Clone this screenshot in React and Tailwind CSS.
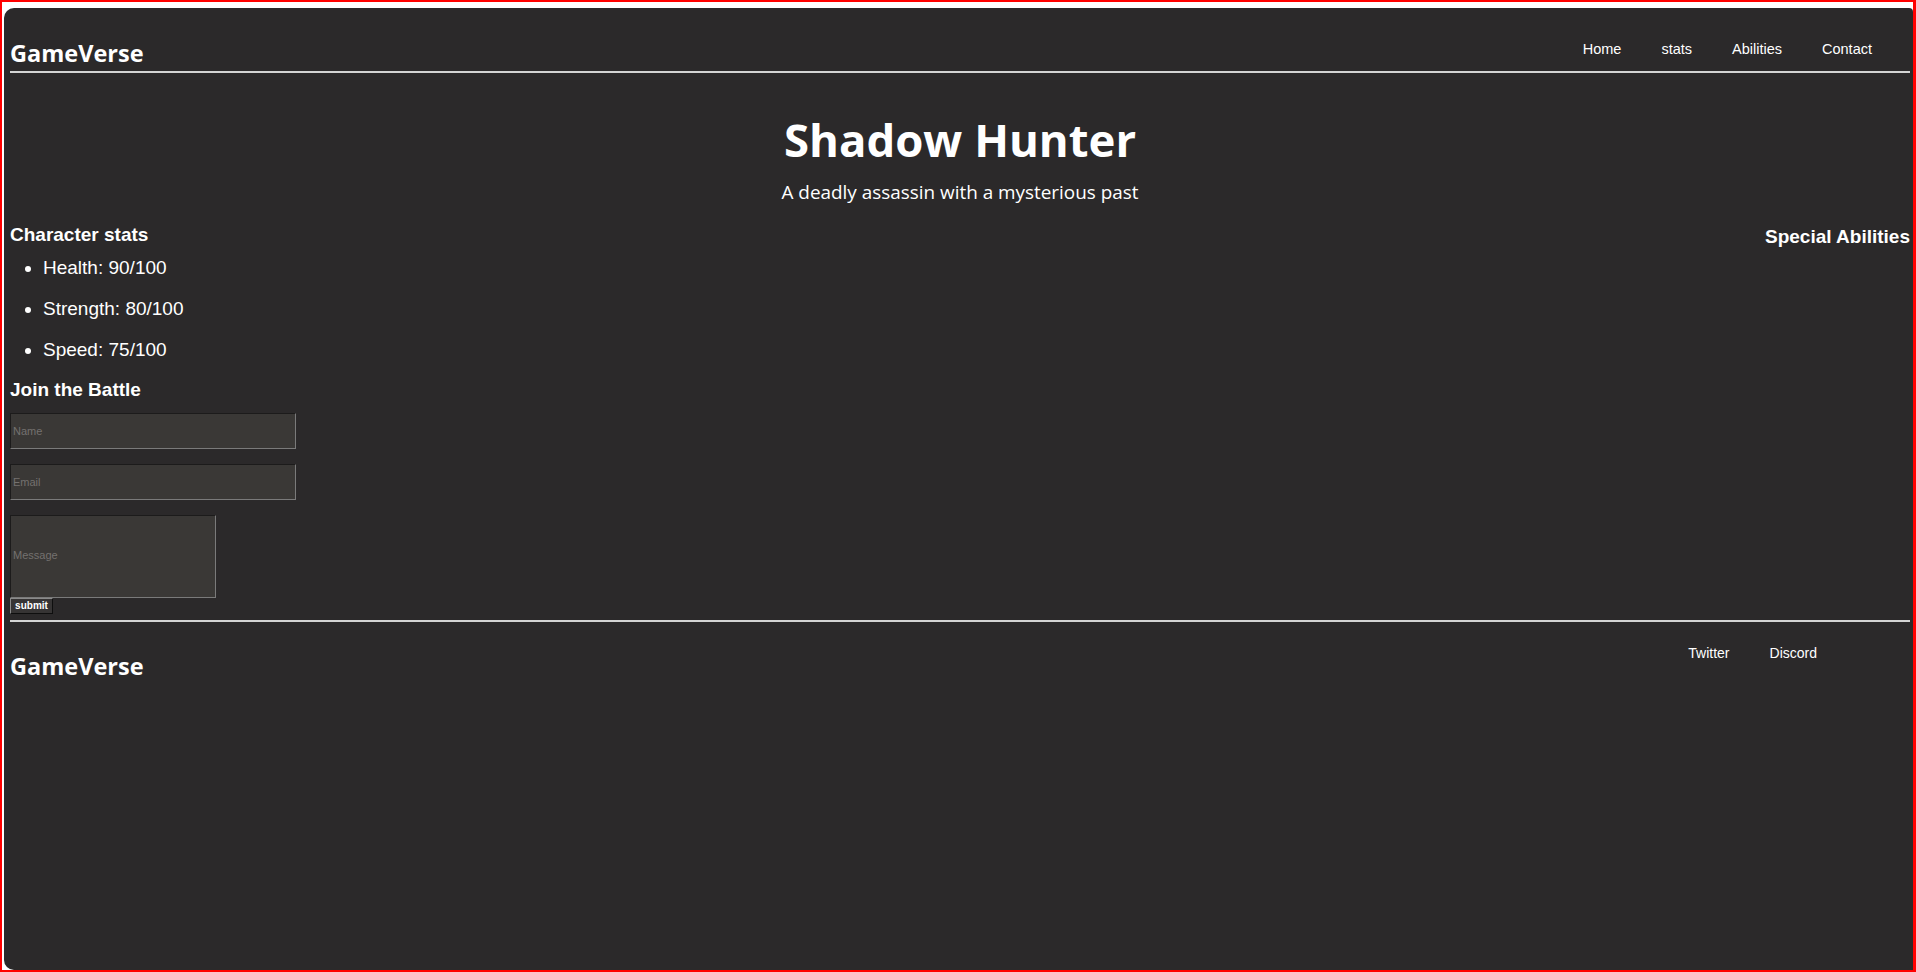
const navLinks = ['Home', 'stats', 'Abilities', 'Contact'];

const stats = [
  { label: 'Health', value: '90/100' },
  { label: 'Strength', value: '80/100' },
  { label: 'Speed', value: '75/100' },
];

const segoe = { fontFamily: '"Open Sans", "Noto Sans", sans-serif' };

const App = () => {
  return (
    <div
      className="h-[972px] w-full overflow-hidden border-2 border-r-[3px] border-[#ff0000] bg-white"
      style={{ fontFamily: '"Liberation Sans", Arial, sans-serif' }}
    >
      <div className="mt-[6px] ml-[2px] h-[962px] rounded-l-[10px] rounded-tr-[4px] bg-[#2b292a] pl-[6px] pr-[3px] text-white">
        {/* Header */}
        <header className="flex justify-between border-b-2 border-[#d4d4d4]">
          <div
            className="pt-[29px] pb-[2px] text-[23.5px] font-bold leading-[32px]"
            style={segoe}
          >
            GameVerse
          </div>
          <ul className="flex gap-10 pt-[31px] pr-[38px] text-[14.5px] leading-[20px]">
            {navLinks.map((link) => (
              <li key={link}>
                <a href="#">{link}</a>
              </li>
            ))}
          </ul>
        </header>

        {/* Hero */}
        <section className="text-center" style={segoe}>
          <h1 className="mt-[38px] text-[45.5px] font-bold leading-[56px]">
            Shadow Hunter
          </h1>
          <p className="mt-[11px] text-[18.9px] leading-[28px]">
            A deadly assassin with a mysterious past
          </p>
        </section>

        {/* Stats + abilities */}
        <section className="mt-[18px] flex justify-between">
          <div>
            <h3 className="text-[19px] font-bold leading-[22px]">
              Character stats
            </h3>
            <ul className="mt-[11px] flex list-disc flex-col gap-[19px] pl-[33px] text-[19px] leading-[22px]">
              {stats.map((s) => (
                <li key={s.label}>
                  {s.label}: {s.value}
                </li>
              ))}
            </ul>

            <h3 className="mt-[18px] text-[19px] font-bold leading-[22px]">
              Join the Battle
            </h3>
            <form className="mt-[12px] flex flex-col items-start">
              <input
                type="text"
                placeholder="Name"
                className="h-[36px] w-[286px] border border-t-[#1c1b1b] border-l-[#1c1b1b] border-r-[#7a7a7a] border-b-[#7a7a7a] bg-[#3a3836] px-[2px] text-[11px] text-white outline-none placeholder:text-[#74716f]"
              />
              <input
                type="email"
                placeholder="Email"
                className="mt-[15px] h-[36px] w-[286px] border border-t-[#1c1b1b] border-l-[#1c1b1b] border-r-[#7a7a7a] border-b-[#7a7a7a] bg-[#3a3836] px-[2px] text-[11px] text-white outline-none placeholder:text-[#74716f]"
              />
              <textarea
                placeholder="Message"
                className="mt-[15px] block h-[83px] w-[206px] resize-none border border-t-[#1c1b1b] border-l-[#1c1b1b] border-r-[#7a7a7a] border-b-[#7a7a7a] bg-[#3a3836] px-[2px] pt-[33px] text-[11px] leading-[13px] text-white outline-none placeholder:text-[#74716f]"
              />
              <button
                type="button"
                className="h-[16px] w-[43px] border border-t-[#8a8a8a] border-l-[#8a8a8a] border-r-[#0e0e0e] border-b-[#0e0e0e] bg-[#363434] text-[10px] font-bold leading-[14px] text-white"
              >
                submit
              </button>
            </form>
          </div>

          <h3 className="mt-[2px] text-[19px] font-bold leading-[22px]">
            Special Abilities
          </h3>
        </section>

        {/* Footer */}
        <footer className="mt-[6px] flex justify-between border-t-2 border-[#d4d4d4]">
          <div
            className="pt-[28px] text-[23.5px] font-bold leading-[32px]"
            style={segoe}
          >
            GameVerse
          </div>
          <ul className="flex gap-10 pt-[21px] pr-[93px] text-[14px] leading-[20px]">
            <li>
              <a href="#">Twitter</a>
            </li>
            <li>
              <a href="#">Discord</a>
            </li>
          </ul>
        </footer>
      </div>
    </div>
  );
};

export default App;
